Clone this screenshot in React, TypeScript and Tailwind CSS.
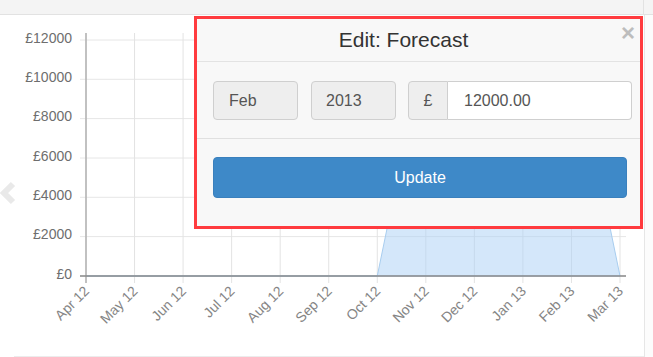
import React from "react";

const yTicks = [
  { v: "£12000", y: 40 },
  { v: "£10000", y: 79.3 },
  { v: "£8000", y: 118.6 },
  { v: "£6000", y: 158 },
  { v: "£4000", y: 197.3 },
  { v: "£2000", y: 236.6 },
  { v: "£0", y: 276 },
];
const months = ["Apr 12", "May 12", "Jun 12", "Jul 12", "Aug 12", "Sep 12", "Oct 12", "Nov 12", "Dec 12", "Jan 13", "Feb 13", "Mar 13"];
const values = [0, 0, 0, 0, 0, 0, 0, 12000, 12000, 12000, 12000, 0];
const x0 = 86;
const dx = (620 - 86) / 11;
const yOf = (v: number) => 276 - (v / 12000) * 236;

function Chart() {
  const pts = values.map((v, i) => `${x0 + i * dx},${yOf(v)}`).join(" ");
  const area = `${x0},276 ${pts} 620,276`;
  return (
    <svg width={644} height={342} viewBox="0 15 644 342" className="block">
      {yTicks.map((t) => (
        <line key={t.v} x1={80} x2={626} y1={t.y} y2={t.y} stroke="#e6e6e6" strokeWidth={1} />
      ))}
      {months.map((m, i) => (
        <line key={m} x1={x0 + i * dx} x2={x0 + i * dx} y1={33} y2={283} stroke="#e3e3e3" strokeWidth={1} />
      ))}
      <polygon points={area} fill="#a9d0f5" fillOpacity={0.5} stroke="#a8cdef" strokeWidth={1} />
      <line x1={86} x2={86} y1={33} y2={283} stroke="#b0b0b0" strokeWidth={1.5} />
      <line x1={80} x2={626} y1={276} y2={276} stroke="#8a8a8a" strokeWidth={1.5} />
      {yTicks.map((t) => (
        <text
          key={t.v}
          x={72}
          y={t.y - 1}
          textAnchor="end"
          dominantBaseline="middle"
          fontFamily="'Liberation Sans', Arial, sans-serif"
          fontSize={14}
          fill="#6e6e6e"
        >
          {t.v}
        </text>
      ))}
      {months.map((m, i) => {
        const x = x0 + i * dx + 4;
        const y = 292;
        return (
          <text
            key={m}
            x={x}
            y={y}
            textAnchor="end"
            transform={`rotate(-45 ${x} ${y})`}
            fontFamily="'Liberation Sans', Arial, sans-serif"
            fontSize={14}
            fill="#858585"
          >
            {m}
          </text>
        );
      })}
      <polyline points="13,184 4,193 13,202" fill="none" stroke="#e9e9e9" strokeWidth={6} />
      <line x1={14} x2={644} y1={356.5} y2={356.5} stroke="#ececec" strokeWidth={1} />
    </svg>
  );
}

export default function App() {
  return (
    <div
      className="relative w-[653px] h-[357px] overflow-hidden bg-white flex flex-col"
      style={{ fontFamily: "'Liberation Sans', Arial, sans-serif" }}
    >
      <div className="h-[15px] shrink-0 bg-[#f4f4f4] border-b border-[#e2e2e2] flex">
        <div className="w-[644px] border-r border-[#e2e2e2]" />
      </div>
      <div className="flex flex-1">
        <div className="w-[645px] border-r border-[#e6e6e6]">
          <Chart />
        </div>
        <div className="flex-1 bg-[#fcfcfc]" />
      </div>

      <div className="absolute left-[194px] top-[16px] w-[449px] h-[213px] border-[3px] border-[#ff3b3f] bg-[#f8f8f8] flex flex-col">
        <div className="relative h-[43px] shrink-0 border-b border-[#e3e3e3] flex items-center justify-center pr-[30px] pb-[1px]">
          <span className="text-[21px] text-[#333]">Edit: Forecast</span>
          <span className="absolute right-[5px] top-[2px] text-[24px] leading-none font-bold text-[#bdbdbd]">×</span>
        </div>
        <div className="h-[77px] shrink-0 border-b border-[#e0e0e0] flex items-start pt-[19px] pl-[16px]">
          <div className="w-[85px] h-[39px] rounded-[4px] border border-[#cfcfcf] bg-[#eeeeee] flex items-center pl-[15px] text-[16px] text-[#555]">
            Feb
          </div>
          <div className="ml-[13px] w-[85px] h-[39px] rounded-[4px] border border-[#cfcfcf] bg-[#eeeeee] flex items-center pl-[14px] text-[16px] text-[#555]">
            2013
          </div>
          <div className="ml-[12px] w-[224px] h-[39px] flex">
            <div className="w-[40px] h-full rounded-l-[4px] border border-[#cfcfcf] bg-[#eeeeee] flex items-center justify-center text-[16px] text-[#555]">
              £
            </div>
            <div className="flex-1 h-full rounded-r-[4px] border border-l-0 border-[#cfcfcf] bg-white flex items-center pl-[16px] text-[16px] text-[#555]">
              12000.00
            </div>
          </div>
        </div>
        <div className="flex-1 pt-[18px] pl-[16px]">
          <div className="w-[414px] h-[41px] rounded-[4px] bg-[#3e89c8] border border-[#3a80bd] flex items-center justify-center text-[16px] text-white">
            Update
          </div>
        </div>
      </div>
    </div>
  );
}
